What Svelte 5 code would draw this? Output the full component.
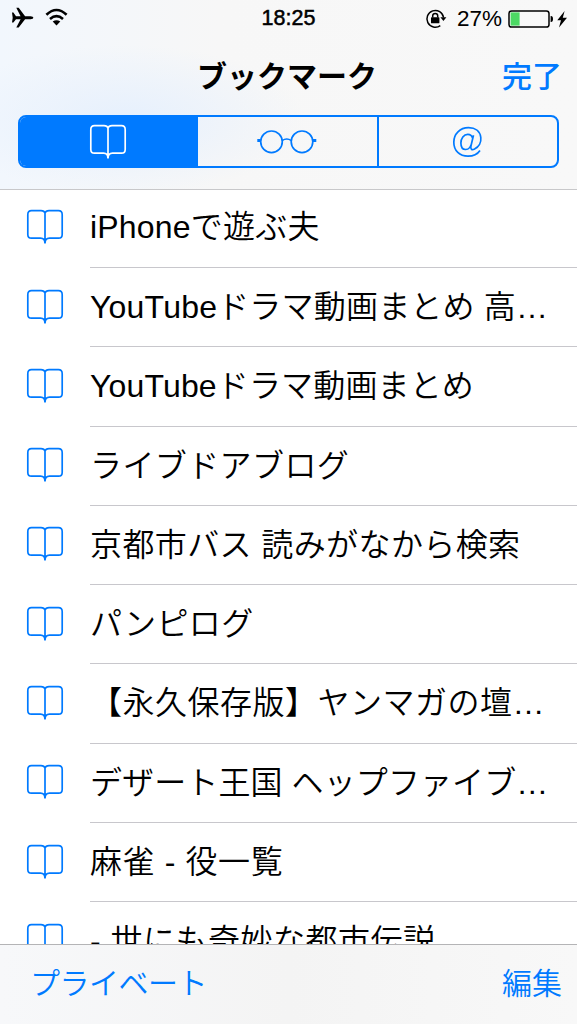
<script lang="ts">
	const bookmarks = [
		{ title: 'iPhoneで遊ぶ夫', tracking: 0.2 },
		{ title: 'YouTubeドラマ動画まとめ 高…', tracking: 0.2 },
		{ title: 'YouTubeドラマ動画まとめ', tracking: 0.15 },
		{ title: 'ライブドアブログ', tracking: 0.4 },
		{ title: '京都市バス 読みがなから検索', tracking: 0.4 },
		{ title: 'パンピログ', tracking: 0.4 },
		{ title: '【永久保存版】ヤンマガの壇…', tracking: 0.5 },
		{ title: 'デザート王国 ヘップファイブ…', tracking: 0.1 },
		{ title: '麻雀 - 役一覧', tracking: 0.6 },
		{ title: '- 世にも奇妙な都市伝説', tracking: 0.5 }
	];

	let tab = $state('bookmarks');
</script>

{#snippet book()}
	<svg class="book" width="38" height="36" viewBox="0 0 38 36" aria-hidden="true">
		<path
			d="M19 4C18.4 2 17 1.7 15 1.7H5.5Q1.8 1.7 1.8 5.4V25.5Q1.8 29.2 5.5 29.2H14.5C17.2 29.2 19 30.5 19 34.5C19 30.5 20.8 29.2 23.5 29.2H32.5Q36.2 29.2 36.2 25.5V5.4Q36.2 1.7 32.5 1.7H23C21 1.7 19.6 2 19 4ZM19 4V34"
		/>
	</svg>
{/snippet}

<div class="screen">
	<header>
		<div class="status">
			<div class="left">
				<svg width="60" height="24" viewBox="0 0 60 24" aria-hidden="true">
					<path
						d="M4 5.5H5.4L8 9.3H12.6L8.3 0.7H10.7L17.1 9.3H22.6Q25.4 9.6 25.4 10.8T22.6 12.3H17.1L10.7 20.4H8.3L12.6 12.3H8L5.4 15.5H4L4.7 10.8Z"
					/>
					<g class="waves">
						<path d="M38.4 7.7Q48.5-1.7 58.6 7.7" />
						<path d="M42 12Q48.5 6.4 55 12" />
					</g>
					<path d="M44.7 14.6Q48.5 11.8 52.3 14.6L48.5 18.5Z" />
				</svg>
			</div>
			<span class="time">18:25</span>
			<div class="right">
				<svg width="22" height="22" viewBox="0 0 22 22" aria-hidden="true">
					<path class="ring" d="M15.3 17.6A8.4 8.4 0 1 1 18.6 9.5" />
					<path d="M15.4 9.3H21.4L18.4 13Z" />
					<rect x="6" y="9.3" width="8.4" height="6" rx=".6" />
					<path class="ring" d="M7.7 9.5V7.7Q7.7 5.4 10.2 5.4T12.7 7.7V9.5" />
				</svg>
				<span class="percent">27%</span>
				<svg width="61" height="20" viewBox="0 0 61 20" aria-hidden="true">
					<rect class="case" x="1" y="2" width="40" height="16" rx="2.6" />
					<rect class="level" x="2.6" y="3.4" width="9" height="13.2" />
					<path d="M42.6 7H43Q45 7 45 10T43 13H42.6Z" />
					<path d="M56.6 2L49.3 11.2H53L51 18.6L59 8.7H54.8Z" />
				</svg>
			</div>
		</div>
		<div class="navbar">
			<h1>ブックマーク</h1>
			<button class="done">完了</button>
		</div>
		<div class="tabs">
			<button class:active={tab === 'bookmarks'} onclick={() => (tab = 'bookmarks')} aria-label="ブックマーク">
				{@render book()}
			</button>
			<button class:active={tab === 'reading'} onclick={() => (tab = 'reading')} aria-label="リーディングリスト">
				<svg width="60" height="26" viewBox="0 0 60 26" aria-hidden="true">
					<circle cx="14.5" cy="12.8" r="10.8" />
					<circle cx="45" cy="12.8" r="10.8" />
					<path d="M25.1 11.6Q29.7 8.4 34.4 11.6" />
					<path class="hinge" d="M.3 11.4H3.8M55.7 11.4H59.3" />
				</svg>
			</button>
			<button class:active={tab === 'shared'} onclick={() => (tab = 'shared')} aria-label="共有リンク">
				<svg width="32" height="32" viewBox="0 0 32 32" aria-hidden="true">
					<path
						d="M21.5 9.2L19 19.8C18.2 23.5 20 24.3 22.2 23.3C27 21 29.4 16.2 28.8 11.5C28.1 5.1 23.2 1.7 16.5 1.7C8 1.7 1.8 7.8 1.8 16.2C1.8 24.8 7.7 30.2 16 30.2C21.6 30.2 25.5 28.2 28 24.5M20.7 12.4C20 9.6 18.2 8.3 15.8 8.3C11.7 8.3 8.9 12.6 8.9 17C8.9 20.7 10.6 23.5 13.6 23.5C16.8 23.5 19.1 20 19.7 16.8"
					/>
				</svg>
			</button>
		</div>
	</header>

	<ul>
		{#each bookmarks as { title, tracking }}
			<li>
				{@render book()}
				<span class="title" style="letter-spacing: {tracking}px">{title}</span>
			</li>
		{/each}
	</ul>

	<footer>
		<button class="private">プライベート</button>
		<button>編集</button>
	</footer>
</div>

<style>
	:global(body) {
		background: #fff;
	}

	.screen {
		display: flex;
		flex-direction: column;
		height: 1024px;
		overflow: hidden;
		box-sizing: border-box;
		font-family: 'Liberation Sans', 'Noto Sans CJK JP', sans-serif;
		color: #000;
	}

	.screen * {
		box-sizing: border-box;
	}

	button {
		padding: 0;
		border: 0;
		background: none;
		color: #007aff;
		font: inherit;
		cursor: pointer;
	}

	header {
		flex: none;
		height: 190px;
		border-bottom: 1px solid #c8c8ca;
		background:
			radial-gradient(ellipse 180px 75px at 125px 120px, #e6f0fd, transparent),
			linear-gradient(90deg, #f2f7fd, #f7f7f7 38%, #f8f8f8);
	}

	.status {
		display: grid;
		grid-template-columns: 1fr auto 1fr;
		align-items: center;
		height: 37px;
		padding: 0 8px;
	}

	.left {
		display: flex;
	}

	.waves {
		fill: none;
		stroke: #000;
		stroke-width: 2.6;
	}

	.time {
		font-size: 21.5px;
		-webkit-text-stroke: 0.5px #000;
	}

	.right {
		display: flex;
		align-items: center;
		justify-content: flex-end;
	}

	.ring,
	.case {
		fill: none;
		stroke: #000;
		stroke-width: 1.5;
	}

	.level {
		fill: #4cd964;
	}

	.percent {
		margin: 0 6px 0 10px;
		font-size: 22.5px;
	}

	.navbar {
		display: grid;
		grid-template-columns: 1fr auto 1fr;
		align-items: center;
		height: 78px;
		padding: 0 15px 5px;
	}

	h1 {
		grid-column: 2;
		margin: 0 3px 0 0;
		font-size: 30px;
		font-weight: 700;
	}

	.done {
		justify-self: end;
		font-size: 30px;
		font-weight: 500;
	}

	.tabs {
		display: grid;
		grid-template-columns: 176px 181px 1fr;
		height: 53px;
		margin: 0 18px;
		border: 2px solid #007aff;
		border-radius: 8px;
		overflow: hidden;
	}

	.tabs button {
		display: flex;
		align-items: center;
		justify-content: center;
		padding-right: 1px;
	}

	.tabs button + button {
		border-left: 2px solid #007aff;
	}

	.tabs svg,
	.book {
		fill: none;
		stroke: #007aff;
		stroke-width: 1.7;
	}

	.tabs .hinge {
		stroke-width: 3;
	}

	.tabs .active {
		background: #007aff;
	}

	.tabs .active svg {
		stroke: #fff;
	}

	ul {
		flex: 1;
		min-height: 0;
		margin: -2px 0 0;
		padding: 0;
		list-style: none;
		overflow: hidden;
	}

	li {
		display: flex;
		height: 79.3px;
		padding-left: 26px;
	}

	li:first-child {
		height: 80px;
	}

	.book {
		flex: none;
	}

	li .book {
		margin-top: 21px;
	}

	li + li .book {
		margin-top: 20.5px;
	}

	.title {
		flex: 1;
		margin-left: 26px;
		border-bottom: 1px solid #c8c7cc;
		font-size: 32px;
		font-weight: 350;
		line-height: 79px;
		white-space: nowrap;
	}

	footer {
		display: flex;
		flex: none;
		align-items: center;
		justify-content: space-between;
		height: 80px;
		padding: 0 15px 8px 30px;
		border-top: 1px solid #b4b4b6;
		background: linear-gradient(90deg, #f7f8fa, #f4f4f4 50%, #f8f8f8);
		font-size: 30px;
		font-weight: 350;
	}

	.private {
		letter-spacing: -0.5px;
	}
</style>
